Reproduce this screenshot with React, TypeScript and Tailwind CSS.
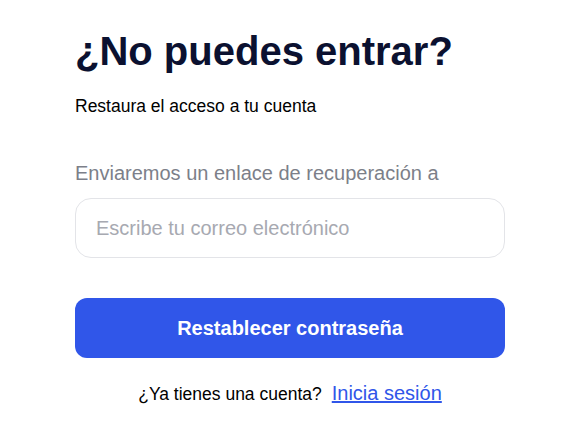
export default function App() {
  return (
    <main className="min-h-screen bg-white font-['Liberation_Sans',Arial,sans-serif]">
      <div className="w-[430px] ml-[75px] pt-[27px]">
        <h1 className="text-[40px] leading-[48px] font-bold text-[#0b1130]">¿No puedes entrar?</h1>
        <p className="mt-[21px] text-[17.5px] leading-[20px] text-black">Restaura el acceso a tu cuenta</p>

        <label htmlFor="email" className="block mt-[46px] text-[20px] leading-[22px] text-[#7c7f89]">
          Enviaremos un enlace de recuperación a
        </label>
        <input
          id="email"
          type="email"
          placeholder="Escribe tu correo electrónico"
          className="mt-[14px] w-full h-[60px] rounded-2xl border border-[#e3e4e8] px-[20px] text-[20px] text-black placeholder:text-[#a7a9b1] outline-none"
        />

        <button className="mt-[40px] w-full h-[60px] rounded-xl bg-[#3056e9] text-white text-[20px] font-bold">
          Restablecer contraseña
        </button>

        <div className="mt-[20px] flex justify-center items-baseline gap-[10px]">
          <span className="text-[17.5px] text-black">¿Ya tienes una cuenta?</span>
          <a href="#" className="text-[20px] text-[#3056e9] underline">Inicia sesión</a>
        </div>
      </div>
    </main>
  );
}
